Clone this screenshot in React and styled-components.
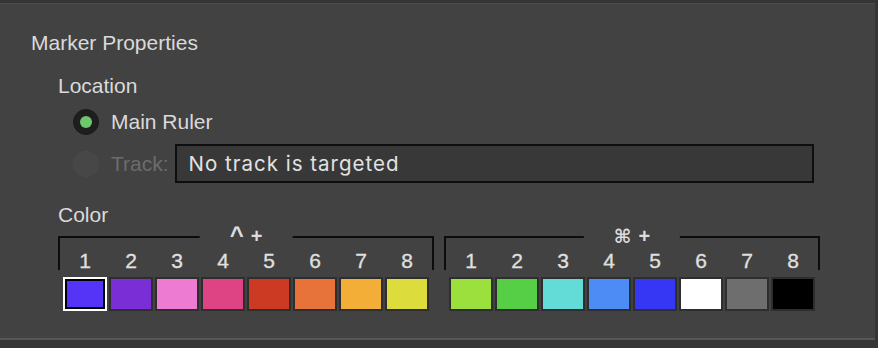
import React from 'react';
import styled, { createGlobalStyle } from 'styled-components';

const Global = createGlobalStyle`
  html, body { margin: 0; padding: 0; background: #353535; }
  body { font-family: "Liberation Sans", Arial, sans-serif; }
`;

const Frame = styled.div`
  width: 878px;
  height: 348px;
  box-sizing: border-box;
  background: #353535;
  padding: 3px 3px 0 0;
  display: flex;
  flex-direction: column;
`;

const Panel = styled.section`
  height: 337px;
  box-sizing: border-box;
  background: #424242;
  border-top: 1px solid #4b4b4b;
  border-bottom: 2px solid #575757;
  padding: 27px 0 0 31px;
  display: flex;
  flex-direction: column;
  align-items: flex-start;
`;

const Title = styled.div`
  font-size: 21px;
  line-height: 24px;
  color: #dadada;
`;

const Section = styled.div`
  margin: 19px 0 0 27px;
  display: flex;
  flex-direction: column;
  align-items: flex-start;
`;

const Label = styled.div`
  font-size: 21px;
  line-height: 24px;
  color: #dadada;
  margin-top: ${p => p.$mt || 0}px;
`;

const Row = styled.div`
  display: flex;
  align-items: center;
  height: ${p => p.$h}px;
  margin-top: ${p => p.$mt}px;
  padding-left: 15px;
`;

const Radio = styled.span`
  width: 26px;
  height: 26px;
  border-radius: 50%;
  box-sizing: border-box;
  background: ${p => (p.$disabled ? '#474747' : '#1e1e1e')};
  border: 1px solid ${p => (p.$disabled ? '#4a4a4a' : '#1a1a1a')};
  display: flex;
  align-items: center;
  justify-content: center;
  flex: none;
  &::after {
    content: '';
    display: ${p => (p.$checked ? 'block' : 'none')};
    width: 12px;
    height: 12px;
    border-radius: 50%;
    background: #6dc86d;
  }
`;

const RadioText = styled.span`
  margin-left: 12px;
  font-size: 21px;
  color: ${p => (p.$disabled ? '#6c6c6c' : '#dadada')};
`;

const TrackInput = styled.div`
  margin-left: 6px;
  width: 639px;
  height: 39px;
  box-sizing: border-box;
  border: 2px solid #0e0e0e;
  background: #383838;
  display: flex;
  align-items: center;
  padding-left: 12px;
  font-family: Inter, "Liberation Sans", sans-serif;
  font-size: 20.5px;
  letter-spacing: 1px;
  color: #e2e2e2;
`;

const Groups = styled.div`
  display: flex;
  gap: 10px;
  margin: 9px 0 0 27px;
`;

const Group = styled.div`
  display: flex;
  flex-direction: column;
  width: 376px;
`;

const Bracket = styled.div`
  position: relative;
  height: 34px;
  box-sizing: border-box;
  border: 2px solid #0c0c0c;
  border-bottom: none;
  padding: 0 3px;
`;

const KeyLabel = styled.span`
  position: absolute;
  top: -12px;
  left: 50%;
  transform: translateX(-50%);
  background: #424242;
  padding: 0 30px;
  line-height: 20px;
  display: flex;
  align-items: center;
  gap: 7px;
  font-family: "Liberation Sans", "DejaVu Sans", sans-serif;
  font-weight: bold;
  font-size: 20px;
  color: #dcdcdc;
  white-space: nowrap;
`;

const Caret = styled.span`
  font-size: 24px;
  line-height: 20px;
  transform: translateY(-1px);
`;

const Cmd = styled.span`
  font-family: "DejaVu Sans", sans-serif;
  font-size: 19px;
`;

const Grid = styled.div`
  display: grid;
  grid-template-columns: repeat(8, 44px);
  column-gap: 2px;
`;

const Numbers = styled(Grid)`
  padding-top: 13px;
`;

const Num = styled.span`
  text-align: center;
  font-size: 21px;
  line-height: 20px;
  color: #e0e0e0;
  -webkit-text-stroke: 0.3px #e0e0e0;
`;

const Swatches = styled(Grid)`
  margin-top: 7px;
  padding: 0 5px;
`;

const Swatch = styled.div`
  height: 34px;
  box-sizing: border-box;
  border: 2px solid ${p => (p.$selected ? '#ffffff' : '#2e2e2e')};
  box-shadow: ${p => (p.$selected ? 'inset 0 0 0 2px #000' : 'none')};
  background: ${p => p.$color};
`;

const groups = [
  {
    key: <Caret>^</Caret>,
    colors: ['#5533f7', '#7a2ed6', '#ec7bd1', '#de4383', '#cd3a23', '#e8733a', '#f2ae36', '#dcdc3c'],
  },
  {
    key: <Cmd>⌘</Cmd>,
    colors: ['#9be03c', '#56cf46', '#63dcd8', '#4d8bf5', '#3636f5', '#ffffff', '#6e6e6e', '#000000'],
  },
];

export default function App() {
  return (
    <>
      <Global />
      <Frame>
        <Panel>
          <Title>Marker Properties</Title>
          <Section>
            <Label>Location</Label>
            <Row $h={30} $mt={9}>
              <Radio $checked />
              <RadioText>Main Ruler</RadioText>
            </Row>
            <Row $h={39} $mt={7}>
              <Radio $disabled />
              <RadioText $disabled>Track:</RadioText>
              <TrackInput>No track is targeted</TrackInput>
            </Row>
            <Label $mt={20}>Color</Label>
          </Section>
          <Groups>
            {groups.map((g, gi) => (
              <Group key={gi}>
                <Bracket>
                  <KeyLabel>
                    {g.key}
                    <span>+</span>
                  </KeyLabel>
                  <Numbers>
                    {g.colors.map((_, i) => (
                      <Num key={i}>{i + 1}</Num>
                    ))}
                  </Numbers>
                </Bracket>
                <Swatches>
                  {g.colors.map((c, i) => (
                    <Swatch key={i} $color={c} $selected={gi === 0 && i === 0} />
                  ))}
                </Swatches>
              </Group>
            ))}
          </Groups>
        </Panel>
      </Frame>
    </>
  );
}
